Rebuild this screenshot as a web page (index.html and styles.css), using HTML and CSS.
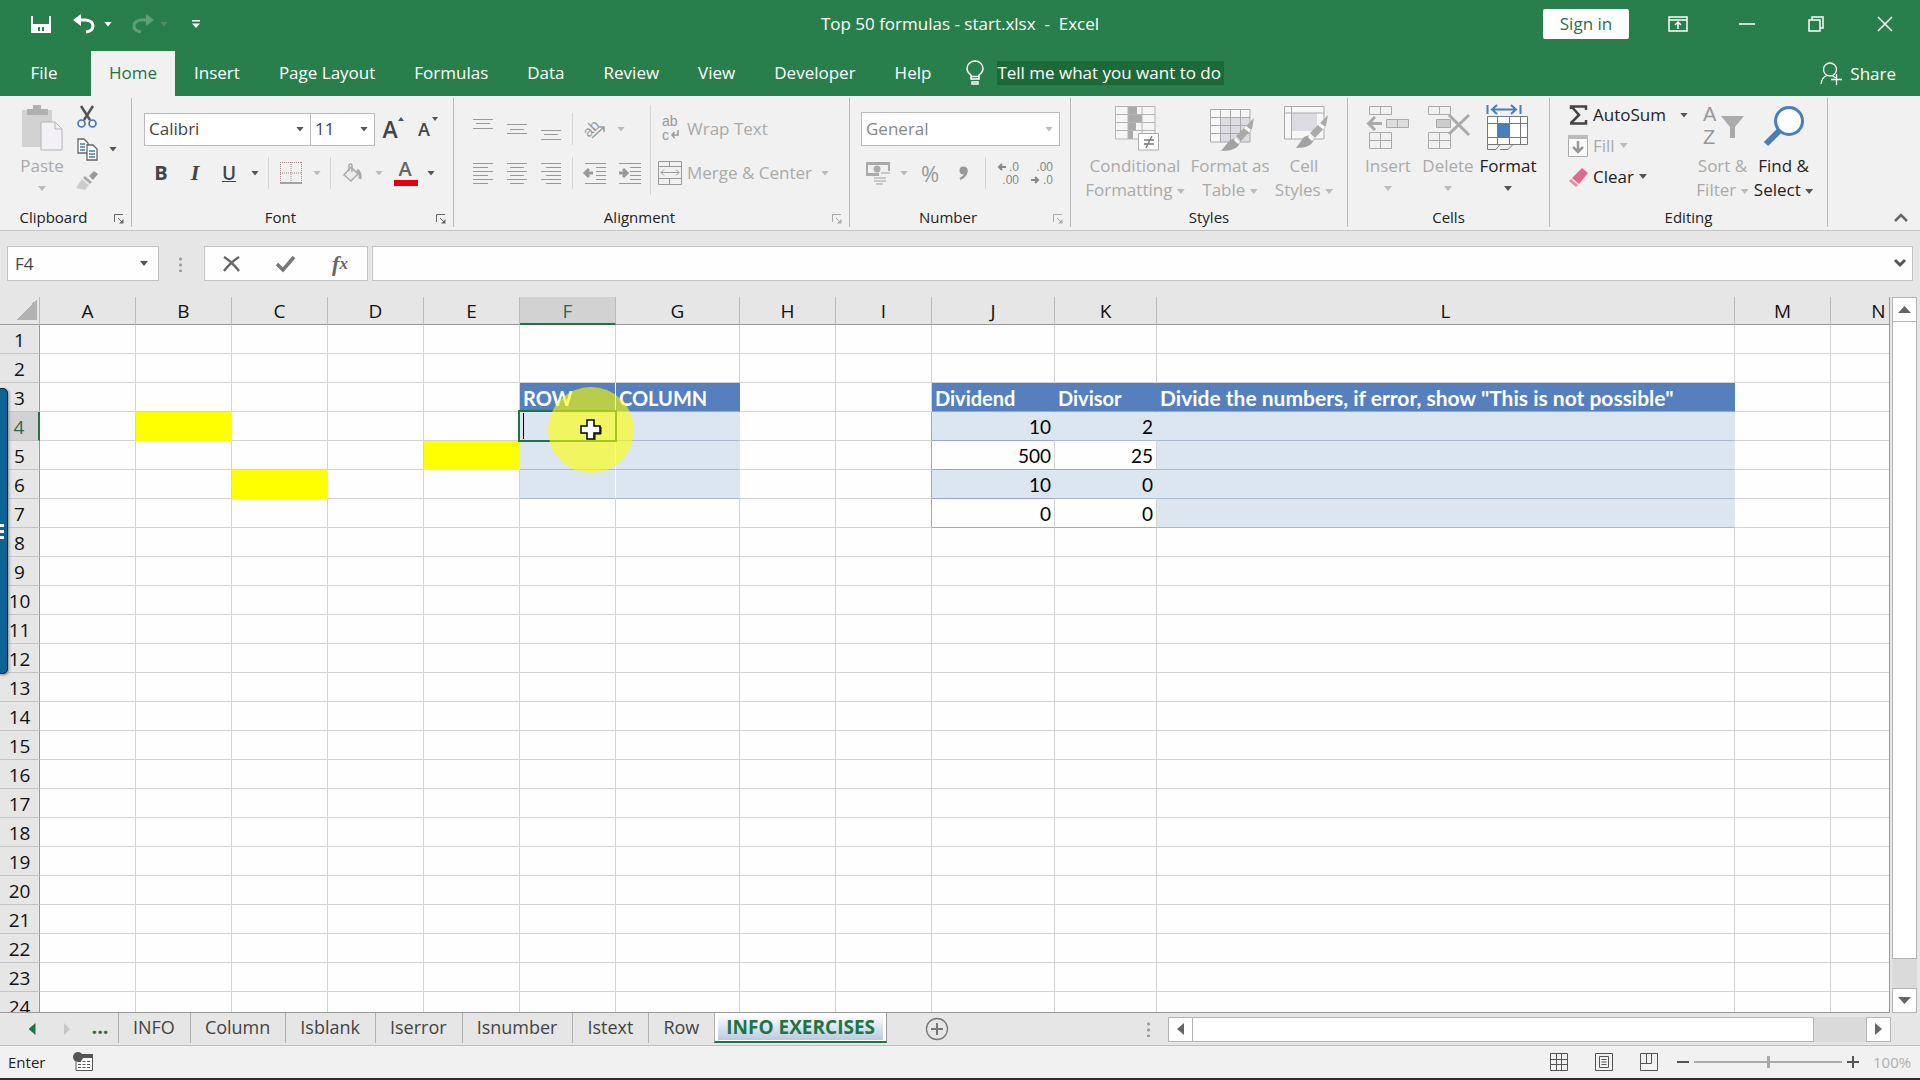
FILE: index.html
```
<!DOCTYPE html>
<html lang="en">
	<head>
		<meta charset="utf-8" />
		<title>Top 50 formulas - start.xlsx - Excel</title>
		<link rel="stylesheet" href="styles.css">
	</head>

	<body>
		<!-- title bar -->
		<header class="titlebar">
			<div class="quick">
				<button aria-label="Save"><svg width="20" height="18" viewBox="0 0 20 18"><path d="M1 1V17H19V1" fill="none" stroke="#fff" stroke-width="2"/><path d="M1 9H19V17H13V12H11V17H9V12H7V17H1Z" fill="#fff"/></svg></button>
				<button class="undo" aria-label="Undo"><svg width="23" height="20" viewBox="0 0 23 20"><path d="M3 6H13Q20 7 20 12Q20 17 13 18" fill="none" stroke="#fff" stroke-width="3"/><path d="M0 6L8 0V12Z" fill="#fff"/></svg></button>
				<button class="drop" aria-label="Undo list"><i class="caret"></i></button>
				<button class="undo faded" aria-label="Redo" disabled><svg width="23" height="20" viewBox="0 0 23 20"><path d="M20 6H10Q3 7 3 12Q3 17 10 18" fill="none" stroke="#fff" stroke-width="3"/><path d="M23 6L15 0V12Z" fill="#fff"/></svg></button>
				<button class="drop faded" aria-label="Redo list" disabled><i class="caret"></i></button>
				<button class="custom" aria-label="Customize toolbar"><svg width="8" height="8" viewBox="0 0 8 8"><path d="M0 0H8V1.500H0ZM0 3.500H8L4 8Z" fill="#fff"/></svg></button>
			</div>
			<h1>Top 50 formulas - start.xlsx&nbsp; -&nbsp; Excel</h1>
			<div class="window">
				<button class="signin">Sign in</button>
				<button class="win" aria-label="Ribbon display"><svg width="20" height="16" viewBox="0 0 20 16" fill="none" stroke="#fff" stroke-width="1.500"><path d="M1 1H19V15H1ZM1 4H19M10 13V6M7 9L10 6L13 9"/></svg></button>
				<button class="win" aria-label="Minimize"><svg width="16" height="16" viewBox="0 0 16 16"><path d="M0 8H16" stroke="#fff" stroke-width="1.500"/></svg></button>
				<button class="win" aria-label="Restore"><svg width="16" height="16" viewBox="0 0 16 16" fill="none" stroke="#fff" stroke-width="1.500"><path d="M1 4H12V15H1ZM4 4V1H15V12H12"/></svg></button>
				<button class="win" aria-label="Close"><svg width="16" height="16" viewBox="0 0 16 16"><path d="M1 1L15 15M15 1L1 15" stroke="#fff" stroke-width="1.500"/></svg></button>
			</div>
		</header>

		<!-- ribbon tabs -->
		<nav class="tabs">
			<button class="file">File</button>
			<button class="on">Home</button>
			<button>Insert</button>
			<button>Page Layout</button>
			<button>Formulas</button>
			<button>Data</button>
			<button>Review</button>
			<button>View</button>
			<button>Developer</button>
			<button>Help</button>
			<label class="tell">
				<svg width="18" height="25" viewBox="0 0 18 25" fill="none" stroke="#fff" stroke-width="1.500"><path d="M5 19V15Q1 12 1 8.500A8 7.500 0 0 1 17 8.500Q17 12 13 15V19ZM5 16.500H13M6 22H12V24H6Z"/></svg>
				<input type="text" value="Tell me what you want to do" aria-label="Tell me what you want to do">
			</label>
			<button class="share"><svg width="22" height="23" viewBox="0 0 22 23" fill="none" stroke="#fff" stroke-width="1.300"><circle cx="10" cy="7.500" r="6.500"/><path d="M1 22Q2 15 7 13.500M12 13.500L16 16M16.500 12V23M11 17.500H22"/></svg>Share</button>
		</nav>

		<!-- ribbon -->
		<section class="ribbon">
			<div class="group clipboard">
				<div class="tools">
					<button class="big" disabled>
						<svg width="42" height="46" viewBox="0 0 42 46"><path d="M1 5H31V42H1Z" fill="#d2d2d2"/><path d="M6 4H12V0H20V4H27V10H6Z" fill="#b0b0b0"/><path d="M20 17H34L41 24V45H20Z" fill="#f3f1f6" stroke="#b4b4b4"/><path d="M34 17V24H41" fill="none" stroke="#b4b4b4"/></svg>
						<span>Paste</span><i class="caret"></i>
					</button>
					<div class="stack">
						<button class="btn" aria-label="Cut"><svg width="20" height="22" viewBox="0 0 20 22"><path d="M4 0L13 14M16 0L7 14" stroke="#555" stroke-width="2.500"/><g fill="none" stroke="#4678b4" stroke-width="1.700"><circle cx="4.500" cy="17.500" r="3.500"/><circle cx="15.500" cy="17.500" r="3.500"/></g></svg></button>
						<div class="row">
							<button class="btn" aria-label="Copy"><svg width="21" height="23" viewBox="0 0 21 23" fill="#fff" stroke="#666" stroke-width="1.300"><path d="M1 1H7L11 5V15H1Z"/><path d="M10 7H16L20 11V22H10Z"/><path d="M3 6H8M3 9H8M3 12H8M12 13H18M12 16H18M12 19H18" stroke="#4678b4"/></svg></button>
							<button class="drop" aria-label="Copy options"><i class="caret"></i></button>
						</div>
						<button class="btn" aria-label="Format Painter" disabled><svg width="22" height="20" viewBox="0 0 22 20"><path d="M18 0L22 3L17 9L13 5Z" fill="#999"/><path d="M9 5L16 11L14 13L7 7Z" fill="#aaa"/><path d="M6 8L13 14L9 19L0 17Z" fill="#ccc"/></svg></button>
					</div>
				</div>
				<div class="name">Clipboard<button class="launch" aria-label="Clipboard settings"><svg width="10" height="10" viewBox="0 0 10 10"><path d="M.5 8V.5H9M4 4L8 8" fill="none" stroke="currentColor"/><path d="M9.500 5V9.500H5Z" fill="currentColor"/></svg></button></div>
			</div>

			<div class="group font">
				<div class="tools lines">
					<div class="row">
						<span class="combo family"><input type="text" value="Calibri" aria-label="Font"><i class="caret"></i></span>
						<span class="combo size"><input type="text" value="11" aria-label="Font size"><i class="caret"></i></span>
						<button class="btn grow" aria-label="Increase font size">A<i class="up"></i></button>
						<button class="btn shrink" aria-label="Decrease font size">A<i class="caret"></i></button>
					</div>
					<div class="row">
						<button class="btn bold">B</button>
						<button class="btn italic">I</button>
						<button class="btn under">U</button>
						<button class="drop" aria-label="Underline options"><i class="caret"></i></button>
						<i class="sep"></i>
						<button class="btn" aria-label="Borders" disabled><svg width="22" height="22" viewBox="0 0 22 22" fill="none" stroke="#a88" stroke-dasharray="1 1"><path d="M.5 0V22M21.500 0V22M11 0V22M0 .5H22M0 11H22"/><path d="M0 21H22" stroke="#888" stroke-width="1.500" stroke-dasharray="none"/></svg></button>
						<button class="drop" aria-label="Border options" disabled><i class="caret"></i></button>
						<i class="sep"></i>
						<button class="btn" aria-label="Fill color" disabled><svg width="20" height="20" viewBox="0 0 20 20" fill="none" stroke="#aaa" stroke-width="1.500"><path d="M8 4L15 11L8 18L1 12Z" fill="#ececec"/><path d="M6 8V2Q8 0 9 2V9"/><path d="M14 7Q18 10 17 16" stroke-width="3"/></svg></button>
						<button class="drop" aria-label="Fill color options" disabled><i class="caret"></i></button>
						<button class="btn color" aria-label="Font color">A</button>
						<button class="drop" aria-label="Font color options"><i class="caret"></i></button>
					</div>
				</div>
				<div class="name">Font<button class="launch" aria-label="Font settings"><svg width="10" height="10" viewBox="0 0 10 10"><path d="M.5 8V.5H9M4 4L8 8" fill="none" stroke="currentColor"/><path d="M9.500 5V9.500H5Z" fill="currentColor"/></svg></button></div>
			</div>

			<div class="group align">
				<div class="tools">
					<div class="lines">
						<div class="row">
							<button class="btn" aria-label="Top align" disabled><svg width="20" height="24" viewBox="0 0 20 24"><path d="M0 2.500H20M3 6.500H17M0 11.500H20" stroke="#999"/></svg></button>
							<button class="btn" aria-label="Middle align" disabled><svg width="20" height="24" viewBox="0 0 20 24"><path d="M0 7.500H20M3 12.500H17M0 16.500H20" stroke="#999"/></svg></button>
							<button class="btn" aria-label="Bottom align" disabled><svg width="20" height="24" viewBox="0 0 20 24"><path d="M0 13.500H20M3 17.500H17M0 22.500H20" stroke="#999"/></svg></button>
							<i class="sep"></i>
							<button class="btn" aria-label="Orientation" disabled><svg width="22" height="22" viewBox="0 0 22 22"><text x="1" y="19" font-size="15" transform="rotate(-45 4 15)" fill="#999">ab</text><path d="M8 20L20 9M20 14V9H15" fill="none" stroke="#999" stroke-width="1.500"/></svg></button>
							<button class="drop" aria-label="Orientation options" disabled><i class="caret"></i></button>
						</div>
						<div class="row">
							<button class="btn" aria-label="Align left" disabled><svg width="20" height="22" viewBox="0 0 20 22"><path d="M0 1.500H20M0 5.500H15M0 9.500H20M0 13.500H15M0 17.500H20M0 21.500H15" stroke="#999"/></svg></button>
							<button class="btn" aria-label="Center" disabled><svg width="20" height="22" viewBox="0 0 20 22"><path d="M0 1.500H20M3 5.500H17M0 9.500H20M3 13.500H17M0 17.500H20M3 21.500H17" stroke="#999"/></svg></button>
							<button class="btn" aria-label="Align right" disabled><svg width="20" height="22" viewBox="0 0 20 22"><path d="M0 1.500H20M5 5.500H20M0 9.500H20M5 13.500H20M0 17.500H20M5 21.500H20" stroke="#999"/></svg></button>
							<i class="sep"></i>
							<button class="btn" aria-label="Decrease indent" disabled><svg width="23" height="22" viewBox="0 0 23 22"><path d="M1 1.500H22M12 5.500H22M12 9.500H22M12 13.500H22M12 17.500H22M1 21.500H22" stroke="#999"/><path d="M9 11H2M5 7L1 11L5 15" fill="none" stroke="#999" stroke-width="3"/></svg></button>
							<button class="btn" aria-label="Increase indent" disabled><svg width="23" height="22" viewBox="0 0 23 22"><path d="M1 1.500H23M12 5.500H23M12 9.500H23M12 13.500H23M12 17.500H23M1 21.500H23" stroke="#999"/><path d="M1 11H8M5 7L9 11L5 15" fill="none" stroke="#999" stroke-width="3"/></svg></button>
						</div>
					</div>
					<i class="sep tall"></i>
					<div class="lines">
						<button class="wide" disabled><svg width="24" height="24" viewBox="0 0 24 24"><text x="4" y="9" font-size="14" fill="#999">ab</text><text x="4" y="23" font-size="14" fill="#999">c</text><path d="M20 13V18H14M16.500 15L14 18L16.500 21" fill="none" stroke="#999" stroke-width="1.500"/></svg>Wrap Text</button>
						<div class="row">
							<button class="wide" disabled><svg width="24" height="24" viewBox="0 0 24 24" fill="none" stroke="#999"><path d="M.5 .5H23.500V23.500H.5ZM.5 5.500H23.500M.5 17.500H23.500M11.500 .5V5.500M11.500 17.500V23.500M3 11.500H21M6 8.500L3 11.500L6 14.500M18 8.500L21 11.500L18 14.500"/></svg>Merge &amp; Center</button>
							<button class="drop merge" aria-label="Merge options" disabled><i class="caret"></i></button>
						</div>
					</div>
				</div>
				<div class="name">Alignment<button class="launch" aria-label="Alignment settings" disabled><svg width="10" height="10" viewBox="0 0 10 10"><path d="M.5 8V.5H9M4 4L8 8" fill="none" stroke="currentColor"/><path d="M9.500 5V9.500H5Z" fill="currentColor"/></svg></button></div>
			</div>

			<div class="group number">
				<div class="tools lines">
					<span class="combo format"><select aria-label="Number format" disabled><option>General</option></select><i class="caret"></i></span>
					<div class="row">
						<button class="btn" aria-label="Accounting format" disabled><svg width="24" height="24" viewBox="0 0 24 24"><path d="M0 1H24V10H22V4H2V12H13V15H0Z" fill="#aaa"/><circle cx="11" cy="8" r="3.500" fill="#aaa"/><path d="M15 12H24M8 17H20M8 20H20M10 23H17" stroke="#bbb" stroke-width="1.500"/></svg></button>
						<button class="drop" aria-label="Accounting options" disabled><i class="caret"></i></button>
						<button class="btn pct" disabled>%</button>
						<button class="btn" aria-label="Comma style" disabled><svg width="10" height="14" viewBox="0 0 10 14"><circle cx="4.500" cy="4.500" r="4" fill="#999"/><path d="M7 3Q9 9 1 13" fill="none" stroke="#999" stroke-width="2.500"/></svg></button>
						<i class="sep"></i>
						<button class="btn" aria-label="Increase decimal" disabled><svg width="24" height="26" viewBox="0 0 24 26"><text x="23" y="11" text-anchor="end" font-size="12" fill="#888">.0</text><text x="23" y="24" text-anchor="end" font-size="12" fill="#888">.00</text><path d="M10 7H3M6 4L3 7L6 10" fill="none" stroke="#888" stroke-width="2"/></svg></button>
						<button class="btn" aria-label="Decrease decimal" disabled><svg width="24" height="26" viewBox="0 0 24 26"><text x="23" y="11" text-anchor="end" font-size="12" fill="#888">.00</text><text x="23" y="24" text-anchor="end" font-size="12" fill="#888">.0</text><path d="M1 20H8M5 17L8 20L5 23" fill="none" stroke="#888" stroke-width="2"/></svg></button>
					</div>
				</div>
				<div class="name">Number<button class="launch" aria-label="Number settings" disabled><svg width="10" height="10" viewBox="0 0 10 10"><path d="M.5 8V.5H9M4 4L8 8" fill="none" stroke="currentColor"/><path d="M9.500 5V9.500H5Z" fill="currentColor"/></svg></button></div>
			</div>

			<div class="group styles">
				<div class="tools">
					<button class="big" disabled>
						<svg width="44" height="46" viewBox="0 0 44 46"><path d="M.5 1H40V34H.5Z" fill="#f5f5f5"/><path d="M13 1H22V9H27V17H21V25H18V34H13Z" fill="#aaa"/><path d="M.5 1.500H40V34H.5ZM.5 9.500H40M.5 17.500H40M.5 25.500H40M13 1V34M27 1V34" fill="none" stroke="#b5b5b5"/><path d="M23.500 28.500H43.500V45H23.500Z" fill="#fff" stroke="#aaa"/><path d="M29 35H39M29 39H39M37 31L31 43" stroke="#777" stroke-width="1.300"/></svg>
						<span>Conditional<br>Formatting <i class="caret"></i></span>
					</button>
					<button class="big" disabled>
						<svg width="44" height="46" viewBox="0 0 44 46"><path d="M.5 4.500H40V37H.5Z" fill="#f7f7f7"/><path d="M11 13H40V37H11Z" fill="#dcdce2"/><path d="M.5 4.500H40V37H.5ZM.5 12.500H40M.5 20.500H40M.5 28.500H40M10.500 4V37M20.500 4V37M30.500 4V37" fill="none" stroke="#aaa"/><path d="M44 13L42 24L31 36L26 31L37 20Z" fill="#aaa"/><path d="M11 46L20 35Q26 31 30 37Q28 46 11 46Z" fill="#a2a2a2"/><path d="M25 34L29 38M35 22L40 26" stroke="#fff" stroke-width="3"/></svg>
						<span>Format as<br>Table <i class="caret"></i></span>
					</button>
					<button class="big" disabled>
						<svg width="44" height="46" viewBox="0 0 44 46"><path d="M.5 1.500H40V34H.5Z" fill="#f7f7f7"/><path d="M8 8H33V26H8Z" fill="#dcdce2"/><path d="M.5 1.500H40V34H.5ZM.5 8H40M7.500 1V34" fill="none" stroke="#aaa"/><path d="M44 10L42 21L31 33L26 28L37 17Z" fill="#aaa"/><path d="M12 43L20 32Q26 28 30 34Q28 43 12 43Z" fill="#a2a2a2"/><path d="M25 31L29 35M35 19L40 23" stroke="#fff" stroke-width="3"/></svg>
						<span>Cell<br>Styles <i class="caret"></i></span>
					</button>
				</div>
				<div class="name">Styles</div>
			</div>

			<div class="group cells">
				<div class="tools">
					<button class="big" disabled>
						<svg width="44" height="46" viewBox="0 0 44 46" fill="none" stroke="#aaa"><path d="M3.500 1.500H25.500V9.500H3.500ZM14.500 1V9M3.500 27.500H25.500V43.500H3.500ZM3.500 35.500H25.500M14.500 27V43"/><path d="M20.500 14.500H42.500V22.500H20.500ZM31.500 14V22" fill="#ddd"/><path d="M16 18.500H3M9 12L2.500 18.500L9 25" stroke-width="3"/></svg>
						<span>Insert</span><i class="caret"></i>
					</button>
					<button class="big" disabled>
						<svg width="44" height="46" viewBox="0 0 44 46" fill="none" stroke="#aaa"><path d="M2.500 1.500H24.500V9.500H2.500ZM13.500 1V9M2.500 27.500H24.500V43.500H2.500ZM2.500 35.500H24.500M13.500 27V43"/><path d="M10.500 14.500H24.500V22.500H10.500Z" fill="#ccc"/><path d="M23 10L43 30M43 10L23 29" stroke-width="3"/></svg>
						<span>Delete</span><i class="caret"></i>
					</button>
					<button class="big">
						<svg width="44" height="46" viewBox="0 0 44 46" fill="none" stroke="#777"><path d="M1.500 11.500H41.500V39.500H1.500Z" fill="#fff"/><path d="M1.500 39.500V44.500H10L14 39.500M14 44.500H22L27 39.500M1.500 18.500H41.500M1.500 32.500H41.500M11.500 11V39M23.500 11V39M34.500 11V39"/><path d="M12 19H23V32H12Z" fill="#4a7ebb" stroke="none"/><path d="M1.500 0V9M34.500 0V9M7 4.500H29M11 0L6 4.500L11 9M25 0L30 4.500L25 9" stroke="#4a7ebb" stroke-width="2"/></svg>
						<span>Format</span><i class="caret"></i>
					</button>
				</div>
				<div class="name">Cells</div>
			</div>

			<div class="group editing">
				<div class="tools">
					<div class="stack left">
						<div class="row">
							<button class="wide"><svg width="20" height="22" viewBox="0 0 20 22"><path d="M3 5V2.500H18V6M3 2L11 11L3 19M2 19.500H18V16" fill="none" stroke="#444" stroke-width="2.500"/></svg>AutoSum</button>
							<button class="drop far" aria-label="AutoSum options"><i class="caret"></i></button>
						</div>
						<button class="wide" disabled><svg width="20" height="22" viewBox="0 0 20 22"><path d="M.5 1.500H19.500V21.500H.5Z" fill="#fafafa" stroke="#aaa"/><path d="M0 0H20V4H0Z" fill="#bbb"/><path d="M10 6V17M5 12L10 17L15 12" fill="none" stroke="#999" stroke-width="2.500"/></svg>Fill <i class="caret"></i></button>
						<button class="wide"><svg width="20" height="22" viewBox="0 0 20 22"><path d="M14 2L20 7L11 18L4 12Z" fill="#e0698f"/><path d="M3 13L10 19L8 21L1 15Z" fill="#e88aa6"/></svg>Clear <i class="caret"></i></button>
					</div>
					<button class="big" disabled>
						<svg width="44" height="46" viewBox="0 0 44 46"><text x="2" y="16" font-size="20" fill="#999">A</text><text x="2" y="39" font-size="20" fill="#999">Z</text><path d="M20 11H43L34 22V33H29V22Z" fill="#aaa"/></svg>
						<span>Sort &amp;<br>Filter <i class="caret"></i></span>
					</button>
					<button class="big">
						<svg width="44" height="46" viewBox="0 0 44 46"><path d="M18 25L4 39" stroke="#4a7ebb" stroke-width="6"/><circle cx="27" cy="16" r="13.500" fill="#fdfdfd" stroke="#4a7ebb" stroke-width="3"/></svg>
						<span>Find &amp;<br>Select <i class="caret"></i></span>
					</button>
				</div>
				<div class="name">Editing</div>
			</div>
			<button class="collapse" aria-label="Collapse ribbon"><svg width="14" height="9" viewBox="0 0 14 9"><path d="M1 8L7 2L13 8" fill="none" stroke="#666" stroke-width="2.500"/></svg></button>
		</section>

		<!-- formula bar -->
		<section class="formula">
			<span class="namebox"><input type="text" value="F4" aria-label="Name box"><i class="caret"></i></span>
			<i class="dots"></i>
			<div class="fx">
				<button aria-label="Cancel"><svg width="18" height="16" viewBox="0 0 18 16"><path d="M1 1Q8 5 16 15M16 1Q8 6 1 15" fill="none" stroke="#666" stroke-width="2.500"/></svg></button>
				<button aria-label="Enter"><svg width="20" height="16" viewBox="0 0 20 16"><path d="M1 8L7 14L18 1" fill="none" stroke="#777" stroke-width="3.500"/></svg></button>
				<button class="fn" aria-label="Insert function">f<small>x</small></button>
			</div>
			<span class="entry"><input type="text" aria-label="Formula"><button aria-label="Expand formula bar"><svg width="12" height="9" viewBox="0 0 12 9"><path d="M1 1L6 6L11 1" fill="none" stroke="#555" stroke-width="3"/></svg></button></span>
		</section>

		<!-- sheet -->
		<main class="sheet">
			<div class="grid">
				<table>
					<colgroup>
						<col class="c-head"><col><col><col><col><col><col><col class="c-g"><col><col><col class="c-j"><col class="c-k"><col class="c-l"><col><col>
					</colgroup>
					<thead>
						<tr><th class="corner"></th><th>A</th><th>B</th><th>C</th><th>D</th><th>E</th><th class="sel">F</th><th>G</th><th>H</th><th>I</th><th>J</th><th>K</th><th>L</th><th>M</th><th>N</th></tr>
					</thead>
					<tbody id="rows"></tbody>
				</table>
			</div>
			<div class="vscroll">
				<button aria-label="Scroll up"><i class="tri up"></i></button>
				<div class="thumb"></div>
				<div class="track"></div>
				<button aria-label="Scroll down"><i class="tri down"></i></button>
			</div>
		</main>

		<!-- sheet tabs -->
		<div class="sheetbar">
			<button class="nav" aria-label="Previous sheet"><i class="tri left green"></i></button>
			<button class="nav" aria-label="Next sheet" disabled><i class="tri right"></i></button>
			<button class="more">...</button>
			<nav class="sheets">
				<button>INFO</button>
				<button>Column</button>
				<button>Isblank</button>
				<button>Iserror</button>
				<button>Isnumber</button>
				<button>Istext</button>
				<button>Row</button>
				<button class="on"><span>INFO EXERCISES</span></button>
			</nav>
			<button class="add" aria-label="New sheet"><svg width="24" height="24" viewBox="0 0 24 24" fill="none" stroke="#777" stroke-width="1.300"><circle cx="12" cy="12" r="10.500"/><path d="M12 6V18M6 12H18" stroke-width="2"/></svg></button>
			<i class="dots"></i>
			<div class="hscroll">
				<button aria-label="Scroll left"><i class="tri left"></i></button>
				<div class="thumb"></div>
				<div class="track"></div>
				<button aria-label="Scroll right"><i class="tri right"></i></button>
			</div>
		</div>

		<footer class="status">
			<span>Enter</span>
			<svg width="21" height="20" viewBox="0 0 21 20"><path d="M3 7V18.500H19.500V3" fill="#fff" stroke="#555"/><path d="M9 2H20V6H9Z" fill="#555"/><circle cx="5" cy="5" r="5" fill="#555"/><path d="M5 9.500H18M5 12.500H18M5 15.500H18" stroke="#555" stroke-dasharray="3 1.500"/></svg>
			<div class="views">
				<button aria-label="Normal"><svg width="20" height="20" viewBox="0 0 20 20" fill="none" stroke="#555"><path d="M1.500 1.500H18.500V18.500H1.500ZM1.500 7.500H18.500M1.500 12.500H18.500M7.500 1V18M12.500 1V18"/></svg></button>
				<button aria-label="Page layout"><svg width="20" height="20" viewBox="0 0 20 20" fill="none" stroke="#555"><path d="M1.500 1.500H18.500V18.500H1.500ZM5.500 4.500H14.500V15.500H5.500ZM7.500 7.500H12.500M7.500 10H12.500M7.500 12.500H12.500"/></svg></button>
				<button aria-label="Page break preview"><svg width="20" height="20" viewBox="0 0 20 20" fill="none" stroke="#555"><path d="M1.500 1.500H18.500V18.500H1.500ZM1.500 11.500H12.500V1.500M7.500 1.500V11.500"/></svg></button>
			</div>
			<button class="zoom" aria-label="Zoom out"><svg width="12" height="12" viewBox="0 0 12 12"><path d="M0 6H12" stroke="#555" stroke-width="2"/></svg></button>
			<input type="range" min="10" max="190" value="100" aria-label="Zoom">
			<button class="zoom" aria-label="Zoom in"><svg width="12" height="12" viewBox="0 0 12 12"><path d="M0 6H12M6 0V12" stroke="#555" stroke-width="2"/></svg></button>
			<span class="level">100%</span>
		</footer>

		<!-- panel handle and pointer -->
		<div class="handle"><i></i><i></i><i></i></div>
		<div class="spot"><svg width="22" height="22" viewBox="0 0 22 22"><path d="M7 1H14V7H20V14H14V20H7V14H1V7H7Z" fill="#fff" stroke="#000" stroke-width="1.500"/><path d="M15 21V15H21V8" fill="none" stroke="#000"/></svg></div>

		<script>
			var cols = 'ABCDEFGHIJKLMN';
			var cells = {
				F3: 'ROW', G3: 'COLUMN',
				J3: 'Dividend', K3: 'Divisor', L3: 'Divide the numbers, if error, show "This is not possible"',
				J4: 10, K4: 2,
				J5: 500, K5: 25,
				J6: 10, K6: 0,
				J7: 0, K7: 0
			};
			var styles = {
				B4: 'yellow', E5: 'yellow', C6: 'yellow',
				F3: 'title gap', G3: 'title', J3: 'title', K3: 'title', L3: 'title long',
				F4: 'band gap active', G4: 'band', F5: 'band gap', G5: 'band', F6: 'band gap', G6: 'band',
				I4: 'side', I5: 'side', I6: 'side', I7: 'side',
				J4: 'band edge', K4: 'band', J5: 'edge', K5: 'edge', J6: 'band edge', K6: 'band', J7: 'edge', K7: 'edge',
				L4: 'band', L5: 'band', L6: 'band', L7: 'band'
			};
			var html = '';
			for(var r = 1; r <= 24; r++) {
				html += '<tr><th' + (r == 4 ? ' class="sel"' : '') + '>' + r + '</th>';
				for(var c = 0; c < cols.length; c++) {
					var id = cols[c] + r;
					var text = id in cells ? cells[id] : '';
					html += '<td' + (styles[id] ? ' class="' + styles[id] + '"' : '') + '>' + text + '</td>';
				}
				html += '</tr>';
			}
			document.getElementById('rows').innerHTML = html;
		</script>
	</body>

</html>
```
FILE: styles.css
```
* {
	box-sizing: border-box;
}

body {
	margin: 0;
	height: 100vh;
	display: flex;
	flex-direction: column;
	overflow: hidden;
	background: #e6e6e6;
	color: #222;
	font-family: "Open Sans", "Noto Sans", sans-serif;
	font-size: 17px;
	line-height: 24px;
	border-bottom: 2px solid #2f2b2e;
}

button,
input,
select {
	margin: 0;
	padding: 0;
	border: 0;
	background: none;
	color: inherit;
	font: inherit;
	outline: none;
}

button {
	display: flex;
	align-items: center;
	justify-content: center;
	white-space: nowrap;
}

button:disabled {
	color: #aaa;
}

svg {
	display: block;
	flex: none;
	overflow: visible;
	font-family: "Liberation Sans", sans-serif;
}

.caret {
	display: inline-block;
	flex: none;
	width: 8px;
	height: 5px;
	background: #555;
	clip-path: polygon(0 0, 100% 0, 50% 100%);
	vertical-align: middle;
}

button:disabled .caret,
.format .caret {
	background: #bbb;
}

.row {
	display: flex;
	align-items: center;
}

/* title bar */
.titlebar {
	display: grid;
	grid-template-columns: 1fr auto 1fr;
	height: 51px;
	padding-bottom: 3px;
	background: #297f4b;
	color: #fff;
}

.titlebar h1 {
	margin: 0;
	align-self: center;
	font-size: 17px;
	font-weight: normal;
}

.quick {
	display: flex;
	padding-left: 24px;
}

.quick button {
	width: 34px;
}

.quick .drop {
	width: 20px;
	height: auto;
}

.quick .undo {
	width: 40px;
	padding-left: 12px;
}

.quick .undo.faded {
	width: 36px;
}

.quick .custom {
	width: 44px;
}

.quick .caret {
	background: #fff;
}

.quick .faded {
	opacity: .25;
}

.window {
	display: flex;
	align-items: center;
	justify-content: flex-end;
	padding-right: 1px;
}

.signin {
	width: 86px;
	height: 30px;
	margin-right: 14px;
	border-radius: 2px;
	background: #fff;
	color: #217346;
}

.win {
	width: 69px;
	height: 48px;
}

/* ribbon tabs */
.tabs {
	display: flex;
	height: 45px;
	background: #297f4b;
	color: #fff;
}

.tabs button {
	padding: 0 20px 2px 19px;
}

.tabs .file {
	width: 91px;
	padding: 0 3px 2px 0;
}

.tabs .on {
	padding: 0 18px 2px;
	background: #f1f1f1;
	color: #217346;
}

.tell {
	display: flex;
	align-items: center;
	gap: 13px;
	padding: 0 0 2px 15px;
}

.tell input {
	width: 227px;
	height: 24px;
	background: #1c6a38;
}

.tabs .share {
	gap: 8px;
	margin-left: auto;
	padding: 0 24px 0 0;
}

/* ribbon */
.ribbon {
	display: flex;
	height: 135px;
	padding: 2px 0 3px;
	background: #f1f1f1;
	border-bottom: 1px solid #c6c6c6;
}

.group {
	display: flex;
	flex-direction: column;
	flex: none;
	border-right: 1px solid #b8b8b8;
}

.tools {
	display: flex;
	flex: 1;
	padding: 7px 0 0 12px;
}

.lines {
	display: flex;
	flex-direction: column;
	gap: 10px;
}

.tools.lines {
	padding-top: 14px;
}

.align .lines {
	padding-top: 7px;
}

.lines .row,
.lines > .wide {
	height: 34px;
}

.name {
	position: relative;
	height: 22px;
	font-size: 15px;
	line-height: 24px;
	text-align: center;
}

.clipboard .name,
.font .name,
.align .name,
.number .name {
	padding-right: 24px;
}

.launch {
	position: absolute;
	right: 7px;
	top: 9px;
	color: #666;
}

.btn {
	position: relative;
	width: 34px;
	height: 32px;
	color: #444;
}

.drop {
	width: 18px;
	height: 32px;
}

.sep {
	width: 1px;
	height: 32px;
	margin: 0 5px 0 4px;
	background: #d5d5d5;
}

.sep.tall {
	height: 90px;
}

.big {
	flex-direction: column;
	justify-content: flex-start;
	align-self: flex-start;
	gap: 3px;
}

.big span {
	line-height: 24px;
}

.big > .caret {
	margin-top: 5px;
}

.wide {
	gap: 5px;
	justify-content: flex-start;
	height: 30px;
}

.stack {
	display: flex;
	flex-direction: column;
}

.clipboard {
	width: 132px;
}

.clipboard .tools {
	padding-left: 14px;
}

.clipboard .big {
	width: 56px;
}

.clipboard .stack {
	margin-top: -4px;
}

.font {
	width: 322px;
}

.align {
	width: 396px;
}

.align .tall + .lines {
	padding-left: 2px;
}

.merge {
	margin-left: 4px;
}

.number {
	width: 221px;
}

.number .tools {
	padding-left: 11px;
}

.styles {
	width: 277px;
}

.styles svg {
	margin-left: 4px;
}

.styles .big:nth-child(1) {
	width: 104px;
}

.styles .big:nth-child(2) {
	width: 86px;
}

.styles .big:nth-child(3) {
	width: 62px;
}

.cells {
	width: 202px;
}

.cells .tools {
	padding-left: 10px;
}

.cells .big {
	width: 60px;
}

.editing {
	width: 278px;
}

.editing .tools {
	padding-left: 18px;
}

.left {
	width: 124px;
	margin-top: -5px;
}

.left .far {
	margin-left: 10px;
}

.left .wide {
	height: 31px;
}

.left .row {
	height: 30px;
}

.editing .big {
	width: 61px;
}

.collapse {
	align-self: flex-end;
	margin-left: auto;
	padding: 4px 12px 5px;
}

.combo {
	display: flex;
	align-items: center;
	height: 33px;
	padding: 0 6px 0 4px;
	border: 1px solid #bbb;
	background: #fff;
	color: #444;
}

.combo input,
.combo select {
	flex: 1;
	min-width: 0;
	appearance: none;
	opacity: 1;
}

.family {
	width: 167px;
}

.size {
	width: 64px;
	border-left: 0;
}

.format {
	width: 199px;
	color: #888;
}

.tools .format {
	height: 34px;
}

.grow,
.shrink {
	padding-right: 4px;
}

.grow {
	font-size: 23px;
	font-weight: 600;
}

.shrink {
	font-size: 18px;
	font-weight: 600;
}

.grow .up,
.shrink .caret {
	position: absolute;
	right: 5px;
	top: 4px;
	width: 6px;
	height: 4px;
	background: #456;
}

.up {
	clip-path: polygon(50% 0, 100% 100%, 0 100%);
}

.bold {
	font-size: 20px;
	font-weight: bold;
}

.italic {
	font: italic bold 22px "Liberation Serif", serif;
}

.under {
	font-size: 19px;
	font-weight: 600;
	text-decoration: underline;
}

.color {
	font-size: 20px;
	font-weight: 600;
	color: #666;
	align-items: flex-start;
	line-height: 24px;
}

.color::after {
	content: "";
	position: absolute;
	left: 6px;
	bottom: 3px;
	width: 24px;
	height: 6px;
	background: #e00010;
}

.pct {
	font-size: 22px;
}

.btn.pct {
	color: #999;
}

/* formula bar */
.formula {
	display: flex;
	height: 66px;
	padding: 15px 7px 16px 7px;
}

.namebox,
.fx,
.entry {
	display: flex;
	align-items: center;
	border: 1px solid #c3c3c3;
	background: #fefefe;
}

.namebox {
	width: 152px;
	padding: 0 10px 0 7px;
	color: #444;
}

.namebox input,
.entry input {
	flex: 1;
	min-width: 0;
}

.dots {
	width: 3px;
	height: 16px;
	background: radial-gradient(circle, #999 1px, transparent 2px) 0 0 / 3px 6px;
}

.formula .dots {
	margin: 10px 22px 0 20px;
}

.fx {
	width: 164px;
	margin-right: 4px;
}

.fx button {
	flex: 1;
}

.fx .fn {
	font: italic bold 22px "Liberation Serif", serif;
	color: #666;
}

.fn small {
	font-size: 17px;
}

.entry {
	flex: 1;
	padding-right: 6px;
}

/* sheet */
.sheet {
	display: flex;
	flex: 1;
	min-height: 0;
}

.grid {
	flex: 1;
	min-width: 0;
	overflow: hidden;
	border-right: 1px solid #999;
	border-bottom: 1px solid #999;
	background: #e6e6e6;
}

table {
	width: 1927px;
	table-layout: fixed;
	border-collapse: separate;
	border-spacing: 0;
	background: #fefefe;
}

col {
	width: 96px;
}

.c-head {
	width: 40px;
}

.c-g {
	width: 124px;
}

.c-j {
	width: 123px;
}

.c-k {
	width: 102px;
}

.c-l {
	width: 578px;
}

th,
td {
	height: 29px;
	padding: 2px 3px 0;
	border-right: 1px solid #d4d4d4;
	border-bottom: 1px solid #d4d4d4;
	line-height: 24px;
	white-space: nowrap;
}

th {
	padding: 1px 0 0;
	background: #e6e6e6;
	color: #111;
	font-size: 19px;
	font-weight: normal;
	text-align: center;
}

thead th {
	height: 28px;
	border-right-color: #bbb;
	border-bottom-color: #999;
}

tbody th {
	border-right-color: #999;
	border-bottom-color: #c4c4c4;
}

.corner {
	background: linear-gradient(135deg, transparent 50%, #b2b2b2 50%) 16px 2px / 21px 21px no-repeat #e6e6e6;
}

th.sel {
	background: #d2d2d2;
	color: #2b6a4a;
}

thead .sel {
	border-bottom: 2px solid #217346;
}

tbody .sel {
	border-right: 2px solid #217346;
}

td {
	font-family: Lato, "Open Sans", sans-serif;
	font-size: 19px;
	text-align: right;
	color: #000;
}

.yellow {
	background: #ff0;
	border-color: #ff0;
}

.title {
	background: #5580bd;
	border-color: #5580bd;
	border-bottom-color: #8eaad8;
	color: #fff;
	font-size: 20px;
	font-weight: bold;
	text-align: left;
}

.long {
	font-size: 21px;
}

.band {
	background: #dce6f1;
	border-right-color: #dce6f1;
	border-bottom-color: #a9b9d2;
}

.edge {
	border-bottom-color: #9da6dc;
}

.side {
	border-right-color: #9da6dc;
}

.gap {
	border-right-color: #fff;
}

.active {
	position: relative;
}

.active::before {
	content: "";
	position: absolute;
	left: -2px;
	top: -2px;
	right: -2px;
	bottom: -2px;
	border: 2px solid #217346;
}

.active::after {
	content: "";
	position: absolute;
	left: 3px;
	top: 1px;
	bottom: 1px;
	width: 1px;
	background: #000;
}

/* scroll bars */
.tri {
	width: 13px;
	height: 7px;
	background: #666;
}

.tri.down {
	clip-path: polygon(0 0, 100% 0, 50% 100%);
}

.tri.left,
.tri.right {
	width: 7px;
	height: 12px;
	margin: 0;
}

.tri.left {
	clip-path: polygon(100% 0, 100% 100%, 0 50%);
}

.tri.right {
	clip-path: polygon(0 0, 100% 50%, 0 100%);
}

.tri.green {
	background: #217346;
}

button:disabled .tri {
	background: #c6c6c6;
}

.vscroll {
	display: flex;
	flex-direction: column;
	width: 25px;
	margin: 0 3px 0 2px;
}

.vscroll button,
.hscroll button,
.thumb {
	border: 1px solid #b5b5b5;
	background: #fff;
}

.vscroll button {
	height: 25px;
}

.vscroll .thumb {
	flex: 22;
	border-top: 0;
}

.track {
	flex: 1;
	background: #dadada;
}

/* sheet tabs */
.sheetbar {
	display: flex;
	align-items: center;
	height: 33px;
	padding-right: 29px;
	border-bottom: 1px solid #c0c0c0;
}

.nav {
	width: 34px;
	height: 32px;
}

.nav:first-child {
	width: 64px;
}

.nav:nth-child(2) {
	width: 6px;
}

.more {
	width: 48px;
	height: 32px;
	padding: 0 0 4px 12px;
	color: #217346;
	font-size: 20px;
	font-weight: bold;
}

.sheets {
	display: flex;
	align-self: flex-start;
	height: 30px;
}

.sheets button {
	padding: 0 15px 2px 14px;
	border-left: 1px solid #b0b0b0;
	color: #444;
	font-size: 18px;
}

.sheets .on {
	padding: 0 3px;
	border-right: 1px solid #999;
	border-bottom: 2px solid #217346;
	background: #fff;
	color: #217346;
	font-size: 19px;
	font-weight: bold;
}

.on span {
	padding: 1px 8px;
	background: linear-gradient(#fff, #b9cbe0);
}

.add {
	margin: 0 auto 0 38px;
}

.hscroll {
	display: flex;
	width: 723px;
	height: 25px;
	margin-left: 18px;
}

.hscroll button {
	width: 25px;
}

.hscroll .thumb {
	flex: 12;
	border-left: 0;
}

/* status bar */
.status {
	display: flex;
	align-items: center;
	height: 32px;
	padding: 0 8px;
	background: #f1f1f1;
	font-size: 15px;
}

.status > svg {
	margin-left: 28px;
}

.views {
	display: flex;
	gap: 25px;
	margin-left: auto;
}

.zoom {
	margin-left: 18px;
}

input[type="range"] {
	appearance: none;
	width: 148px;
	height: 14px;
	margin: 0 5px;
	background: linear-gradient(#aaa, #aaa) center / 100% 2px no-repeat;
}

input[type="range"]::-webkit-slider-thumb {
	appearance: none;
	width: 3px;
	height: 12px;
	background: #aaa;
}

input + .zoom {
	margin-left: 0;
}

.level {
	width: 53px;
	padding-left: 14px;
	color: #b0b0b0;
}

/* overlays */
.handle {
	position: fixed;
	left: -4px;
	top: 388px;
	display: flex;
	flex-direction: column;
	align-items: center;
	justify-content: center;
	gap: 3px;
	width: 12px;
	height: 286px;
	border: 1px solid #0a1a26;
	border-radius: 5px;
	background: #0b6494;
	box-shadow: 1px 1px 3px #888;
}

.handle i {
	width: 4px;
	height: 3px;
	background: #fff;
}

.spot {
	position: fixed;
	left: 548px;
	top: 387px;
	display: grid;
	place-items: center;
	width: 86px;
	height: 86px;
	border-radius: 50%;
	background: rgba(253, 255, 0, .6);
}
```
